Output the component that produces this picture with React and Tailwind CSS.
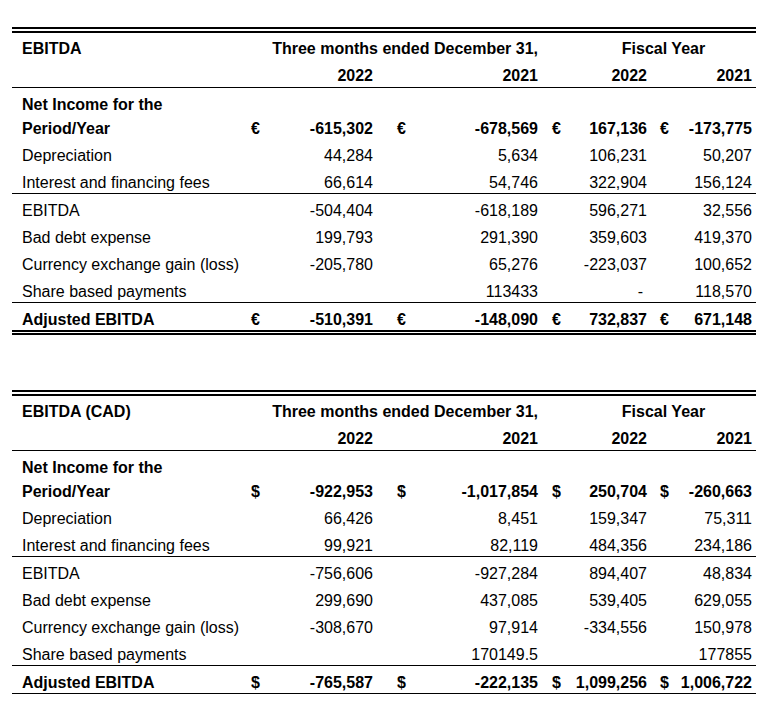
import React from 'react';

const COLS = 'grid grid-cols-[233px_20px_113px_32px_133px_22px_87px_20px_84px] items-end';

const tables = [
    {
        title: 'EBITDA',
        cur: '€',
        doubleBottom: true,
        rows: [
            { label: ['Net Income for the', 'Period/Year'], bold: true, cur: true, vals: ['-615,302', '-678,569', '167,136', '-173,775'], h: 'h-[51px]' },
            { label: 'Depreciation', vals: ['44,284', '5,634', '106,231', '50,207'] },
            { label: 'Interest and financing fees', vals: ['66,614', '54,746', '322,904', '156,124'], line: true },
            { label: 'EBITDA', vals: ['-504,404', '-618,189', '596,271', '32,556'] },
            { label: 'Bad debt expense', vals: ['199,793', '291,390', '359,603', '419,370'] },
            { label: 'Currency exchange gain (loss)', vals: ['-205,780', '65,276', '-223,037', '100,652'] },
            { label: 'Share based payments', vals: ['', '113433', '-', '118,570'], line: true },
            { label: 'Adjusted EBITDA', bold: true, cur: true, vals: ['-510,391', '-148,090', '732,837', '671,148'] },
        ],
    },
    {
        title: 'EBITDA (CAD)',
        cur: '$',
        doubleBottom: false,
        rows: [
            { label: ['Net Income for the', 'Period/Year'], bold: true, cur: true, vals: ['-922,953', '-1,017,854', '250,704', '-260,663'], h: 'h-[51px]' },
            { label: 'Depreciation', vals: ['66,426', '8,451', '159,347', '75,311'] },
            { label: 'Interest and financing fees', vals: ['99,921', '82,119', '484,356', '234,186'], line: true },
            { label: 'EBITDA', vals: ['-756,606', '-927,284', '894,407', '48,834'] },
            { label: 'Bad debt expense', vals: ['299,690', '437,085', '539,405', '629,055'] },
            { label: 'Currency exchange gain (loss)', vals: ['-308,670', '97,914', '-334,556', '150,978'] },
            { label: 'Share based payments', vals: ['', '170149.5', '', '177855'], line: true },
            { label: 'Adjusted EBITDA', bold: true, cur: true, vals: ['-765,587', '-222,135', '1,099,256', '1,006,722'], line: true },
        ],
    },
];

const Row = ({ row, cur }) => {
    const height = row.h || (row.line ? 'h-[28px]' : 'h-[27px]');
    const weight = row.bold ? 'font-bold' : 'font-normal';
    const sym = row.cur ? cur : '';
    const [v1, v2, v3, v4] = row.vals;

    return (
        <div className={`${COLS} ${height} ${weight} ${row.line ? 'border-b border-black' : ''}`}>
            {Array.isArray(row.label) ? (
                <div className="pl-[10px] leading-[24px] -mb-[2px]">
                    {row.label[0]}
                    <br />
                    {row.label[1]}
                </div>
            ) : (
                <div className="pl-[10px] pb-[1px] leading-[18px] whitespace-nowrap">{row.label}</div>
            )}
            <div className="pl-[6px] pb-[1px] leading-[18px]">{sym}</div>
            <div className="pr-[5px] pb-[1px] leading-[18px] text-right">{v1}</div>
            <div className="pl-[19px] pb-[1px] leading-[18px]">{sym}</div>
            <div className="pr-[5px] pb-[1px] leading-[18px] text-right">{v2}</div>
            <div className="pl-[9px] pb-[1px] leading-[18px]">{sym}</div>
            <div className={`${v3 === '-' ? 'pr-[9px]' : 'pr-[5px]'} pb-[1px] leading-[18px] text-right`}>{v3}</div>
            <div className="pl-[8px] pb-[1px] leading-[18px]">{sym}</div>
            <div className="pr-[4px] pb-[1px] leading-[18px] text-right whitespace-nowrap">{v4}</div>
        </div>
    );
};

const EbitdaTable = ({ table }) => (
    <div className="w-[744px]">
        {/* Top double rule */}
        <div className="h-[6px] border-y-2 border-black" />

        {/* Header */}
        <div className={`${COLS} h-[26px] font-bold`}>
            <div className="pl-[10px] pb-[1px] leading-[18px]">{table.title}</div>
            <div className="col-span-4 pr-[5px] pb-[1px] leading-[18px] text-right whitespace-nowrap">
                Three months ended December 31,
            </div>
            <div className="col-span-4 pl-[28px] pb-[1px] leading-[18px] text-center">Fiscal Year</div>
        </div>
        <div className={`${COLS} h-[29px] font-bold border-b border-black`}>
            <div />
            <div />
            <div className="pr-[5px] pb-[2px] leading-[18px] text-right">2022</div>
            <div />
            <div className="pr-[5px] pb-[2px] leading-[18px] text-right">2021</div>
            <div />
            <div className="pr-[5px] pb-[2px] leading-[18px] text-right">2022</div>
            <div />
            <div className="pr-[4px] pb-[2px] leading-[18px] text-right">2021</div>
        </div>

        {/* Body */}
        {table.rows.map((row, i) => (
            <Row key={i} row={row} cur={table.cur} />
        ))}

        {table.doubleBottom && <div className="h-[5px] border-y-2 border-black" />}
    </div>
);

export default function App() {
    return (
        <div className="min-h-[707px] w-[784px] bg-white text-black text-[16px] font-['Liberation_Sans',Arial,sans-serif] pt-[27px] pl-[12px]">
            <div className="flex flex-col gap-[55px]">
                {tables.map((t) => (
                    <EbitdaTable key={t.title} table={t} />
                ))}
            </div>
        </div>
    );
}
